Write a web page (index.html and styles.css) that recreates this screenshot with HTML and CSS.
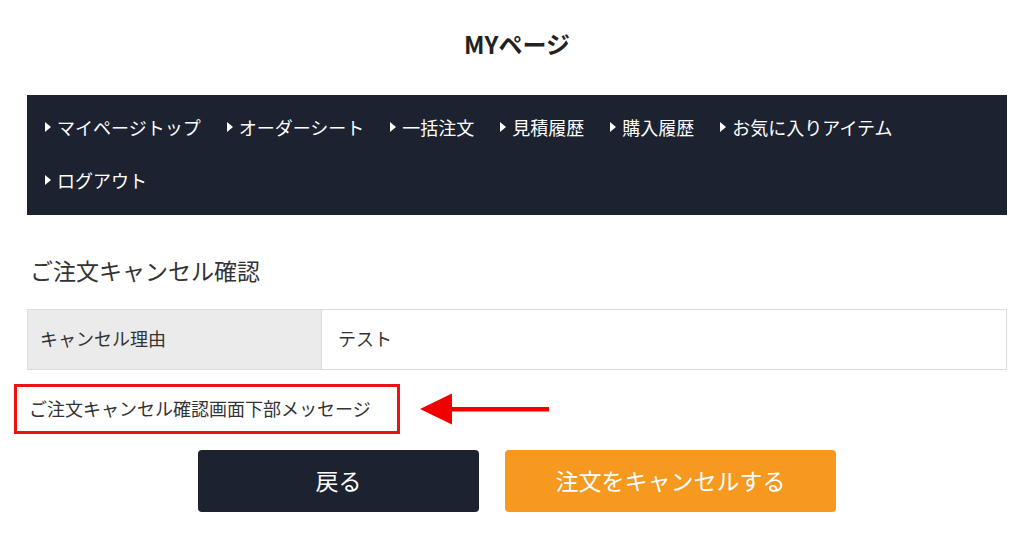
FILE: index.html
```html
<!DOCTYPE html>
<html lang="ja">
<head>
<meta charset="utf-8">
<title>MYページ</title>
<link rel="stylesheet" href="styles.css">
</head>
<body>
<div class="page">
  <h1 class="title">MYページ</h1>
  <nav class="nav">
    <a class="nav-item">マイページトップ</a>
    <a class="nav-item">オーダーシート</a>
    <a class="nav-item">一括注文</a>
    <a class="nav-item">見積履歴</a>
    <a class="nav-item">購入履歴</a>
    <a class="nav-item">お気に入りアイテム</a>
    <a class="nav-item">ログアウト</a>
  </nav>
  <h2 class="heading">ご注文キャンセル確認</h2>
  <div class="table">
    <div class="label">キャンセル理由</div>
    <div class="value">テスト</div>
  </div>
  <div class="message-row">
    <div class="message">ご注文キャンセル確認画面下部メッセージ</div>
    <svg class="arrow" width="130" height="32" viewBox="0 0 130 32">
      <polygon points="0,16 32,0.5 32,31.5" fill="#f20000"/>
      <rect x="30" y="14" width="99" height="4.5" fill="#f20000"/>
    </svg>
  </div>
  <div class="buttons">
    <button class="btn btn-back">戻る</button>
    <button class="btn btn-cancel">注文をキャンセルする</button>
  </div>
</div>
</body>
</html>
```

FILE: styles.css
```css
* { box-sizing: border-box; }
body {
  margin: 0;
  background: #fff;
  font-family: "Noto Sans CJK JP", "Noto Sans", sans-serif;
  color: #333;
}
.page {
  width: 1007px;
  padding-left: 27px;
}
.title {
  margin: 0;
  padding-top: 26px;
  font-size: 24px;
  line-height: 36px;
  font-weight: 700;
  text-align: center;
  color: #222;
}
.nav {
  margin-top: 33px;
  height: 120px;
  background: #1c2230;
  padding: 19px 18px 21px;
  display: flex;
  flex-wrap: wrap;
  row-gap: 27px;
  column-gap: 26px;
  align-content: flex-start;
}
.nav-item {
  display: flex;
  align-items: center;
  gap: 6px;
  color: #fff;
  font-size: 18px;
  line-height: 26px;
}
.nav-item::before {
  content: "";
  width: 0;
  height: 0;
  border-top: 5px solid transparent;
  border-bottom: 5px solid transparent;
  border-left: 6px solid #fff;
}
.heading {
  margin: 39px 0 0 3px;
  font-size: 23px;
  line-height: 32px;
  font-weight: 400;
  color: #333;
}
.table {
  margin-top: 23px;
  display: flex;
  height: 61px;
  border: 1px solid #dcdcdc;
  font-size: 18px;
}
.label {
  width: 294px;
  background: #ebebeb;
  border-right: 1px solid #dcdcdc;
  padding: 0 0 3px 12px;
  display: flex;
  align-items: center;
}
.value {
  flex: 1;
  padding: 0 0 3px 16px;
  display: flex;
  align-items: center;
}
.message-row {
  margin-top: 14px;
  margin-left: -13px;
  display: flex;
  align-items: center;
  gap: 20px;
}
.message {
  width: 386px;
  height: 50px;
  border: 3px solid #ee1111;
  padding: 0 0 3px 12px;
  display: flex;
  align-items: center;
  font-size: 18px;
  color: #333;
}
.arrow { display: block; }
.buttons {
  margin-top: 16px;
  display: flex;
  justify-content: center;
  gap: 26px;
}
.btn {
  height: 62px;
  border: none;
  border-radius: 4px;
  color: #fff;
  font-family: inherit;
  font-size: 23px;
  padding-bottom: 3px;
}
.btn-back {
  width: 281px;
  background: #1c2230;
}
.btn-cancel {
  width: 331px;
  background: #f8991f;
}
```
